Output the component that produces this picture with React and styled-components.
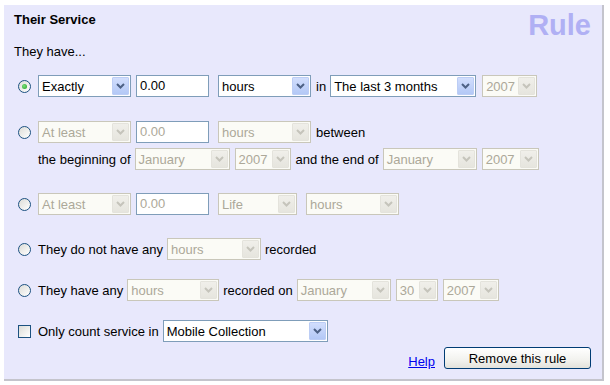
import React from "react"
import styled, { createGlobalStyle } from "styled-components"

const GlobalStyle = createGlobalStyle`
  body {
    margin: 0;
    background: #fff;
    font-family: "Liberation Sans", Arial, sans-serif;
    font-size: 13px;
    color: #000;
  }
`

const Panel = styled.div`
  box-sizing: border-box;
  margin: 5px 0 0 4px;
  width: 600px;
  height: 376px;
  padding: 6px 10px 0 10px;
  background: #e8e8fc;
  border-right: 2px solid #c4c4cc;
  border-bottom: 2px solid #c4c4cc;
`

const Header = styled.div`
  display: flex;
  justify-content: space-between;
  align-items: flex-start;
`

const Title = styled.h2`
  margin: 1px 0 0;
  font-size: 13px;
  line-height: 16px;
  font-weight: bold;
`

const RuleMark = styled.div`
  font-size: 29px;
  line-height: 28px;
  font-weight: bold;
  color: #b0b0f4;
  margin-right: 1px;
`

const Intro = styled.p`
  margin: 5px 0 0;
  line-height: 16px;
`

const Row = styled.div`
  display: flex;
  align-items: center;
  height: 22px;
  margin-top: ${p => p.$top}px;
  padding-left: ${p => p.$indent || 4}px;
  gap: 4px;
`

const Radio = styled.span`
  box-sizing: border-box;
  position: relative;
  width: 13px;
  height: 13px;
  margin-right: 3px;
  border: 1px solid #1c5180;
  border-radius: 50%;
  background: linear-gradient(135deg, #dcdcd7, #fff);
  flex: none;

  &::after {
    content: "";
    display: ${p => (p.$checked ? "block" : "none")};
    position: absolute;
    left: 3px;
    top: 3px;
    width: 5px;
    height: 5px;
    border-radius: 50%;
    background: radial-gradient(circle at 40% 40%, #7be07b, #21a121);
  }
`

const Check = styled.span`
  box-sizing: border-box;
  width: 13px;
  height: 13px;
  margin-right: 3px;
  border: 1px solid #1c5180;
  background: linear-gradient(135deg, #dcdcd7, #fff);
  flex: none;
`

const Label = styled.span`
  white-space: nowrap;
  margin-left: ${p => p.$ml || 0}px;
`

const SelectBox = styled.div`
  box-sizing: border-box;
  display: flex;
  align-items: center;
  width: ${p => p.$w}px;
  height: 22px;
  padding: 1px;
  margin-left: ${p => p.$ml || 0}px;
  border: 1px solid ${p => (p.$disabled ? "#c9c7ba" : "#7f9db9")};
  background: ${p => (p.$disabled ? "#fbfbf6" : "#fff")};
  color: ${p => (p.$disabled ? "#aca899" : "#000")};
  flex: none;
`

const SelectText = styled.span`
  flex: 1;
  padding-left: 2px;
  white-space: nowrap;
  overflow: hidden;
`

const ArrowButton = styled.span`
  box-sizing: border-box;
  display: flex;
  align-items: center;
  justify-content: center;
  width: 17px;
  height: 18px;
  border: 1px solid ${p => (p.$disabled ? "#e4e3dc" : "#bccdf5")};
  border-radius: 1px;
  background: ${p =>
    p.$disabled
      ? "linear-gradient(#f0efea, #e6e5de)"
      : "linear-gradient(#d2defd, #b3c8f6)"};
`

const TextInput = styled.div`
  box-sizing: border-box;
  width: ${p => p.$w}px;
  height: 22px;
  padding: 0 3px;
  margin-left: ${p => p.$ml || 0}px;
  border: 1px solid #7f9db9;
  background: #fff;
  color: ${p => (p.$disabled ? "#aca899" : "#000")};
  line-height: 20px;
  flex: none;
`

const Footer = styled.div`
  display: flex;
  justify-content: flex-end;
  align-items: center;
  margin-top: 5px;
  gap: 9px;
  padding-right: 1px;
`

const HelpLink = styled.a`
  color: #0000ee;
  text-decoration: underline;
  margin-top: 6px;
`

const Button = styled.button`
  box-sizing: border-box;
  width: 147px;
  height: 22px;
  border: 1px solid #003c74;
  border-radius: 3px;
  background: linear-gradient(#ffffff, #f2f2ee 60%, #e3e2db);
  font-family: "Liberation Sans", Arial, sans-serif;
  font-size: 13px;
  color: #000;
  padding: 0;
`

const Select = ({ w, value, disabled, ml }) => (
  <SelectBox $w={w} $disabled={disabled} $ml={ml}>
    <SelectText>{value}</SelectText>
    <ArrowButton $disabled={disabled}>
      <svg width="9" height="6" viewBox="0 0 9 6">
        <path
          d="M1 1 L4.5 4.5 L8 1"
          fill="none"
          stroke={disabled ? "#c5c4bb" : "#4d6185"}
          strokeWidth="2"
        />
      </svg>
    </ArrowButton>
  </SelectBox>
)

export default function App() {
  return (
    <>
      <GlobalStyle />
      <Panel>
        <Header>
          <Title>Their Service</Title>
          <RuleMark>Rule</RuleMark>
        </Header>
        <Intro>They have...</Intro>

        <Row $top={15}>
          <Radio $checked />
          <Select w={93} value="Exactly" />
          <TextInput $w={73} $ml={1}>0.00</TextInput>
          <Select w={93} value="hours" ml={5} />
          <Label $ml={1}>in</Label>
          <Select w={146} value="The last 3 months" />
          <Select w={55} value="2007" disabled ml={2} />
        </Row>

        <Row $top={24}>
          <Radio />
          <Select w={93} value="At least" disabled />
          <TextInput $w={73} $ml={1} $disabled>0.00</TextInput>
          <Select w={93} value="hours" disabled ml={5} />
          <Label $ml={1}>between</Label>
        </Row>
        <Row $top={5} $indent={24}>
          <Label>the beginning of</Label>
          <Select w={95} value="January" disabled />
          <Select w={56} value="2007" disabled ml={1} />
          <Label $ml={1}>and the end of</Label>
          <Select w={94} value="January" disabled />
          <Select w={57} value="2007" disabled ml={1} />
        </Row>

        <Row $top={23}>
          <Radio />
          <Select w={93} value="At least" disabled />
          <TextInput $w={73} $ml={1} $disabled>0.00</TextInput>
          <Select w={79} value="Life" disabled ml={5} />
          <Select w={93} value="hours" disabled ml={5} />
        </Row>

        <Row $top={23}>
          <Radio />
          <Label>They do not have any</Label>
          <Select w={94} value="hours" disabled />
          <Label>recorded</Label>
        </Row>

        <Row $top={19}>
          <Radio />
          <Label>They have any</Label>
          <Select w={92} value="hours" disabled />
          <Label>recorded on</Label>
          <Select w={94} value="January" disabled />
          <Select w={42} value="30" disabled ml={1} />
          <Select w={56} value="2007" disabled ml={1} />
        </Row>

        <Row $top={19}>
          <Check />
          <Label>Only count service in</Label>
          <Select w={165} value="Mobile Collection" />
        </Row>

        <Footer>
          <HelpLink href="#">Help</HelpLink>
          <Button>Remove this rule</Button>
        </Footer>
      </Panel>
    </>
  )
}
